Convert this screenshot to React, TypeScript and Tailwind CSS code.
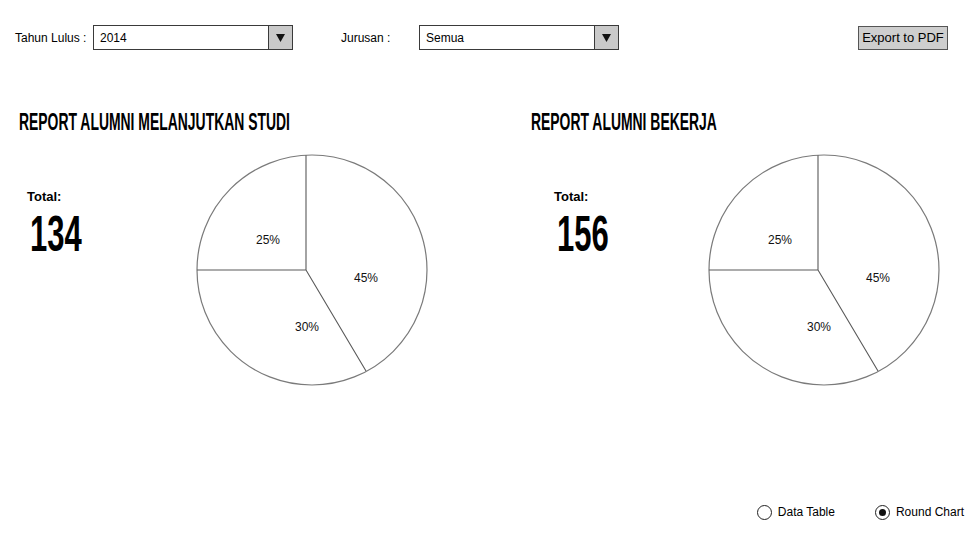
import React, { FC } from "react";

const sketch = { fontFamily: '"Liberation Sans", Arial, sans-serif' };

const Select: FC<{ value: string }> = ({ value }) => (
  <div className="flex h-[25px] w-[200px] border border-[#3a3a3a] bg-white">
    <div className="flex-1 flex items-center pl-[6px] text-[12px] text-black">
      {value}
    </div>
    <div className="flex w-[24px] items-center justify-center border-l border-[#3a3a3a] bg-[#c9c9c9]">
      <svg width="9" height="8" viewBox="0 0 9 8">
        <path d="M0 0 L9 0 L4.5 8 Z" fill="#111" />
      </svg>
    </div>
  </div>
);

const Pie: FC = () => (
  <svg width="236" height="236" viewBox="0 0 236 236" className="shrink-0">
    <circle cx="118" cy="118" r="115" fill="white" stroke="#7a7a7a" strokeWidth="1.2" />
    <path d="M112 118 L112 3.2 M112 118 L3 118 M112 118 L172 219" stroke="#5a5a5a" strokeWidth="1.1" fill="none" />
    <g fontSize="12" fill="#111" textAnchor="middle" dominantBaseline="central" style={sketch}>
      <text x="74" y="88">25%</text>
      <text x="172" y="126">45%</text>
      <text x="113" y="175">30%</text>
    </g>
  </svg>
);

const Report: FC<{ title: string; total: string; wide?: boolean; inset: string }> = ({
  title,
  total,
  wide,
  inset,
}) => (
  <div className={wide ? "w-[512px] shrink-0" : "flex-1 min-w-0"}>
    <div className="h-[24px] whitespace-nowrap">
      <span
        className="inline-block origin-left scale-x-[0.58] text-[24px] leading-[24px] font-bold text-black"
        style={sketch}
      >
        {title}
      </span>
    </div>
    <div className="mt-[18px] flex items-start">
      <div className={`w-[178px] shrink-0 pt-[37px] ${inset}`}>
        <div className="text-[13px] leading-[16px] font-bold text-black" style={sketch}>
          Total:
        </div>
        <div className="mt-[5px] h-[49px] whitespace-nowrap pl-[3px]">
          <span
            className="inline-block origin-left scale-x-[0.62] text-[50px] leading-[49px] font-bold text-black"
            style={sketch}
          >
            {total}
          </span>
        </div>
      </div>
      <div className="-ml-[3px]">
        <Pie />
      </div>
    </div>
  </div>
);

const Radio: FC<{ label: string; checked?: boolean }> = ({ label, checked }) => (
  <div className="flex items-center gap-[6px]">
    <div className="flex h-[15px] w-[15px] items-center justify-center rounded-full border-[1.5px] border-[#222] bg-white">
      {checked && <div className="h-[7px] w-[7px] rounded-full bg-[#111]" />}
    </div>
    <span className="text-[12px] text-black">{label}</span>
  </div>
);

const App: FC = () => {
  return (
    <div className="flex h-[542px] w-[977px] flex-col overflow-hidden bg-white" style={sketch}>
      <div className="mt-[25px] flex h-[25px] items-center pl-[15px] pr-[29px] text-[12px] text-black">
        <div className="w-[78px]">Tahun Lulus :</div>
        <Select value="2014" />
        <div className="ml-[48px] w-[78px]">Jurusan :</div>
        <Select value="Semua" />
        <button
          type="button"
          className="ml-auto h-[24px] w-[90px] border border-[#555] bg-[#cecece] text-[13px] text-black"
        >
          Export to PDF
        </button>
      </div>

      <div className="mt-[60px] flex pl-[19px]">
        <Report title="REPORT ALUMNI MELANJUTKAN STUDI" total="134" wide inset="pl-[8px]" />
        <Report title="REPORT ALUMNI BEKERJA" total="156" inset="pl-[23px]" />
      </div>

      <div className="mt-auto mb-[21px] flex items-center justify-end gap-[40px] pr-[13px]">
        <Radio label="Data Table" />
        <Radio label="Round Chart" checked />
      </div>
    </div>
  );
};

export default App;
